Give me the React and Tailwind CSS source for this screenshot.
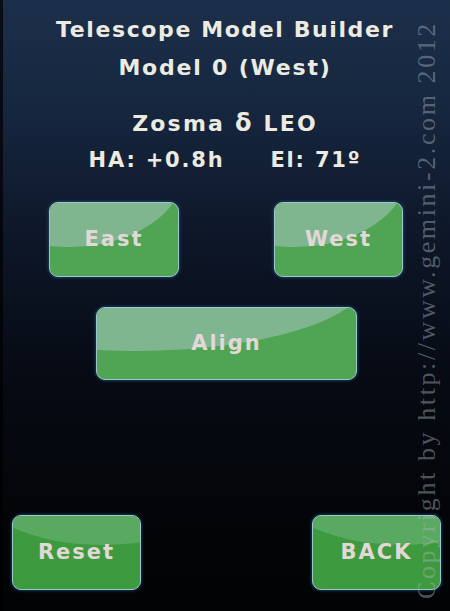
import React from "react";

function GlossButton({ label, className, strong }) {
  return (
    <div
      className={
        "relative overflow-hidden rounded-[9px] border-[1.5px] border-[#9cc6c8] flex items-center justify-center shadow-[0_0_3px_1px_rgba(40,90,140,0.6)] " +
        (strong ? "bg-[#3e9a3f] " : "bg-[#4fa553] ") +
        className
      }
    >
      <div
        className={
          "absolute rounded-[50%] " +
          (strong
            ? "left-[-40%] top-[-170%] w-[220%] h-[210%] bg-[#62ad6a]/80"
            : "left-[-75%] top-[-150%] w-[180%] h-[210%] bg-[#80b68f]")
        }
      />
      <span className="relative text-[21px] font-bold tracking-[2px] text-[#e2d8d8]">
        {label}
      </span>
    </div>
  );
}

export default function App() {
  return (
    <div
      className="relative w-[450px] h-[611px] overflow-hidden bg-[linear-gradient(180deg,#1c2f4a_0%,#16263f_18%,#0d1627_40%,#060a13_62%,#030508_85%,#020304_100%)]"
      style={{ fontFamily: '"DejaVu Sans", Verdana, sans-serif' }}
    >
      <div className="absolute left-0 top-0 bottom-0 w-[3px] bg-black/70" />
      <div className="flex flex-col h-full pt-[11px] text-[#ecebe2] font-bold">
        <div className="text-center text-[22px] leading-[38px] tracking-[1.6px]">
          Telescope Model Builder
        </div>
        <div className="text-center text-[22px] leading-[38px] tracking-[1.8px]">
          Model 0 (West)
        </div>
        <div className="mt-[18px] text-center text-[22px] leading-[37px] tracking-[2.2px]">
          Zosma <span className="text-[24px]">δ</span> LEO
        </div>
        <div className="flex justify-center gap-[46px] text-[21px] leading-[37px] tracking-[1.8px]">
          <span>HA: +0.8h</span>
          <span>El: 71º</span>
        </div>
        <div className="mt-[23px] flex pl-[49px] gap-[95px]">
          <GlossButton label="East" className="w-[130px] h-[75px]" />
          <GlossButton label="West" className="w-[129px] h-[75px]" />
        </div>
        <div className="mt-[30px] pl-[96px] flex">
          <GlossButton label="Align" className="w-[261px] h-[73px]" />
        </div>
        <div className="mt-[135px] flex pl-[12px] gap-[171px]">
          <GlossButton label="Reset" strong className="w-[129px] h-[75px]" />
          <GlossButton label="BACK" strong className="w-[129px] h-[75px]" />
        </div>
      </div>
      <div
        className="absolute left-[427px] top-[310px] -translate-x-1/2 -translate-y-1/2 -rotate-90 whitespace-nowrap text-[26px] leading-none tracking-[2.6px] text-[#aab4bc]/45"
        style={{ fontFamily: '"Liberation Serif", "Times New Roman", serif' }}
      >
        Copyright by http://www.gemini-2.com 2012
      </div>
    </div>
  );
}
